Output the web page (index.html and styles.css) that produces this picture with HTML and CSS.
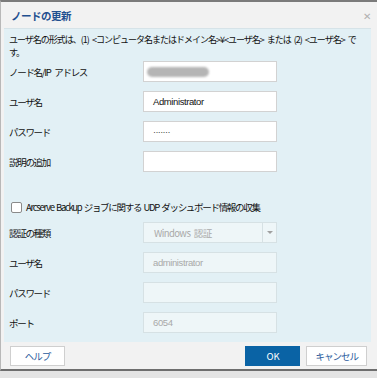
FILE: index.html
```html
<!DOCTYPE html>
<html lang="ja">
<head>
    <meta charset="UTF-8">
    <title>ノードの更新</title>
    <link rel="stylesheet" href="styles.css">
</head>
<body>
    <div class="dialog">
        <div class="dialog-header">
            <span class="dialog-title">ノードの更新</span>
            <span class="close-btn">✕</span>
        </div>

        <div class="panel">
            <p class="info">ユーザ名の形式は、(1) &lt;コンピュータ名またはドメイン名&gt;¥&lt;ユーザ名&gt; または (2) &lt;ユーザ名&gt; で<br>す。</p>

            <div class="form-grid">
                <label class="label">ノード名/IP アドレス</label>
                <div class="field"><span class="blurred"></span></div>

                <label class="label">ユーザ名</label>
                <div class="field">Administrator</div>

                <label class="label">パスワード</label>
                <div class="field"><span class="dots">·······</span></div>

                <label class="label">説明の追加</label>
                <div class="field"></div>
            </div>

            <div class="check-row">
                <span class="checkbox"></span>
                <span class="check-label">Arcserve Backup ジョブに関する UDP ダッシュボード情報の収集</span>
            </div>

            <div class="form-grid">
                <label class="label">認証の種類</label>
                <div class="field disabled select">
                    <span class="select-value">Windows 認証</span>
                    <span class="select-arrow"></span>
                </div>

                <label class="label">ユーザ名</label>
                <div class="field disabled">administrator</div>

                <label class="label">パスワード</label>
                <div class="field disabled"></div>

                <label class="label">ポート</label>
                <div class="field disabled">6054</div>
            </div>
        </div>

        <div class="dialog-footer">
            <button class="btn">ヘルプ</button>
            <div class="footer-right">
                <button class="btn btn-primary">OK</button>
                <button class="btn">キャンセル</button>
            </div>
        </div>
    </div>
</body>
</html>
```

FILE: styles.css
```css
body {
    margin: 0;
    font-family: "Noto Sans CJK JP", "Liberation Sans", sans-serif;
    background: #e4e4e4;
}
.dialog {
    width: 377px;
    height: 371px;
    box-sizing: border-box;
    border-top: 2px solid #7b7b7b;
    border-bottom: 2px solid #6e6e6e;
    border-left: 1px solid #b8b8b8;
    background: #f2f2f2;
    display: flex;
    flex-direction: column;
}
.dialog-header {
    height: 26px;
    display: flex;
    align-items: center;
    justify-content: space-between;
    padding: 0 6px 0 10px;
}
.dialog-title {
    color: #1f4f8f;
    font-size: 10.5px;
    font-weight: bold;
    letter-spacing: -0.5px;
}
.close-btn {
    color: #b0b0b0;
    font-size: 10px;
}
.panel {
    margin: 0 6px 0 3px;
    height: 314px;
    box-sizing: border-box;
    background: #e2f0f5;
    border-top: 1px solid #d6e3e8;
    padding: 4px 0 0 5px;
}
.info {
    margin: 0 0 2px 0;
    font-size: 9px;
    line-height: 13px;
    letter-spacing: -1px;
    word-spacing: 2px;
    color: #111;
}
.form-grid {
    display: grid;
    grid-template-columns: 134px 134px;
    grid-auto-rows: 21px;
    row-gap: 9px;
    align-items: center;
}
.label {
    font-size: 9.5px;
    letter-spacing: -1.3px;
    word-spacing: 3px;
    color: #111;
}
.field {
    height: 21px;
    box-sizing: border-box;
    background: #fff;
    border: 1px solid #d2d2d2;
    padding-left: 9px;
    font-family: "Liberation Sans", sans-serif;
    font-size: 9.5px;
    letter-spacing: -0.4px;
    color: #111;
    display: flex;
    align-items: center;
}
.blurred {
    width: 62px;
    height: 10px;
    background: #b5b5b5;
    border-radius: 5px;
    margin-left: -6px;
    filter: blur(1.2px);
}
.dots {
    font-size: 9px;
    letter-spacing: -0.6px;
    color: #444;
}
.check-row {
    display: flex;
    align-items: center;
    gap: 4px;
    margin: 28px 0 8px 2px;
    height: 14px;
}
.checkbox {
    width: 9px;
    height: 9px;
    border: 1px solid #8a8a8a;
    border-radius: 2px;
    background: #fff;
}
.check-label {
    font-size: 9.5px;
    letter-spacing: -1.3px;
    word-spacing: 1.5px;
    color: #111;
}
.disabled {
    background: #eef6f8;
    border-color: #d6e1e4;
    color: #a9a9a9;
}
.select {
    padding-left: 0;
    justify-content: space-between;
}
.select-value {
    padding-left: 10px;
    font-family: "Noto Sans CJK JP", "Liberation Sans", sans-serif;
    letter-spacing: -0.6px;
    word-spacing: 2px;
}
.select-arrow {
    width: 13px;
    height: 100%;
    border-left: 1px solid #d6e1e4;
    position: relative;
}
.select-arrow::after {
    content: "";
    position: absolute;
    left: 4px;
    top: 8px;
    border-left: 3px solid transparent;
    border-right: 3px solid transparent;
    border-top: 3px solid #a0a0a0;
}
.dialog-footer {
    flex: 1;
    display: flex;
    justify-content: space-between;
    align-items: center;
    padding: 0 10px 0 9px;
}
.footer-right {
    display: flex;
    gap: 6px;
}
.btn {
    height: 20px;
    min-width: 55px;
    padding: 0 8px;
    background: #fff;
    border: 1px solid #cfcfcf;
    color: #2a5b9c;
    font-family: "Noto Sans CJK JP", "Liberation Sans", sans-serif;
    font-size: 9.5px;
    letter-spacing: -1px;
}
.btn-primary {
    background: #0a63a5;
    border-color: #0a63a5;
    color: #fff;
    letter-spacing: 0;
}
```
